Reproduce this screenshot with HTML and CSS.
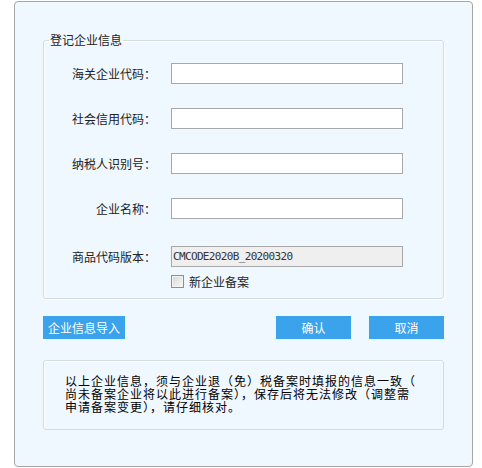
FILE: index.html
```html
<!DOCTYPE html>
<html lang="zh-CN">
<head>
<meta charset="utf-8">
<title>登记企业信息</title>
<link rel="stylesheet" href="styles.css">
</head>
<body>
<div class="panel">
  <fieldset class="group">
    <legend class="group-title">登记企业信息</legend>
    <div class="rows">
      <div class="row"><label class="lbl">海关企业代码：</label><input class="txt" type="text"></div>
      <div class="row"><label class="lbl">社会信用代码：</label><input class="txt" type="text"></div>
      <div class="row"><label class="lbl">纳税人识别号：</label><input class="txt" type="text"></div>
      <div class="row"><label class="lbl">企业名称：</label><input class="txt" type="text"></div>
      <div class="row row-version"><label class="lbl">商品代码版本：</label><input class="txt txt-disabled" type="text" value="CMCODE2020B_20200320" readonly></div>
      <div class="row row-check"><span class="lbl"></span><label class="check"><input class="cb" type="checkbox"><span>新企业备案</span></label></div>
    </div>
  </fieldset>
  <div class="actions">
    <button class="btn btn-import">企业信息导入</button>
    <div class="actions-right">
      <button class="btn btn-small">确认</button>
      <button class="btn btn-small">取消</button>
    </div>
  </div>
  <div class="notice">以上企业信息，须与企业退（免）税备案时填报的信息一致（<br>尚未备案企业将以此进行备案），保存后将无法修改（调整需<br>申请备案变更），请仔细核对。</div>
</div>
</body>
</html>
```
FILE: styles.css
```css
html, body {
  margin: 0;
  padding: 0;
  background: #ffffff;
}
body {
  font-family: "Noto Sans CJK SC", "Noto Sans", sans-serif;
  font-size: 12px;
  color: #222;
}
.panel {
  box-sizing: border-box;
  margin: 1px 0 0 14px;
  width: 459px;
  height: 466px;
  border: 1px solid #a6a6a6;
  border-radius: 4px;
  background: #eff7ff;
  padding: 31px 0 0 28px;
}
.group {
  box-sizing: border-box;
  width: 401px;
  margin: 0;
  padding: 16px 0 10px 0;
  min-width: 0;
  border: 1px solid #d3dbe3;
  border-radius: 3px;
  box-shadow: inset 1px 1px 0 #ffffff, 1px 1px 0 #ffffff;
}
.group-title {
  margin-left: 5px;
  padding: 0 1px;
  line-height: 14px;
  font-size: 12px;
  color: #222;
}
.rows {
  display: flex;
  flex-direction: column;
  gap: 24px;
}
.row {
  display: flex;
  align-items: center;
  height: 21px;
}
.row-version {
  margin-top: 3px;
}
.row-check {
  margin-top: -16px;
  height: 13px;
}
.lbl {
  width: 112px;
  margin-right: 15px;
  text-align: right;
  line-height: 14px;
  white-space: nowrap;
}
.txt {
  box-sizing: border-box;
  width: 232px;
  height: 21px;
  margin: 0;
  padding: 0 2px;
  border: 1px solid #a8a8a8;
  background: #ffffff;
  outline: none;
}
.txt-disabled {
  background: #efefef;
  color: #333;
  font-family: "DejaVu Sans Mono", "Liberation Mono", monospace;
  font-size: 11px;
  letter-spacing: -0.65px;
  padding-left: 1px;
}
.check {
  display: flex;
  align-items: center;
  gap: 5px;
  line-height: 14px;
}
.cb {
  appearance: none;
  -webkit-appearance: none;
  box-sizing: border-box;
  width: 13px;
  height: 13px;
  margin: 0;
  border: 1px solid #8e8f8f;
  background: linear-gradient(135deg, #d6d6d6, #fafafa);
  box-shadow: inset 0 0 0 1px #f2f2f2;
}
.actions {
  display: flex;
  justify-content: space-between;
  width: 401px;
  margin-top: 17px;
}
.actions-right {
  display: flex;
  gap: 18px;
}
.btn {
  height: 23px;
  margin: 0;
  padding: 0;
  border: none;
  background: #3ba2ec;
  color: #ffffff;
  font-family: "Noto Sans CJK SC", "Noto Sans", sans-serif;
  font-size: 12px;
  line-height: 23px;
}
.btn-import {
  width: 82px;
}
.btn-small {
  width: 75px;
}
.notice {
  box-sizing: border-box;
  width: 401px;
  height: 70px;
  margin-top: 21px;
  padding: 13px 0 0 21px;
  border: 1px solid #d3dbe3;
  border-radius: 3px;
  box-shadow: inset 1px 1px 0 #ffffff;
  font-size: 12px;
  letter-spacing: 1px;
  line-height: 13px;
  color: #000;
  white-space: nowrap;
}
```
